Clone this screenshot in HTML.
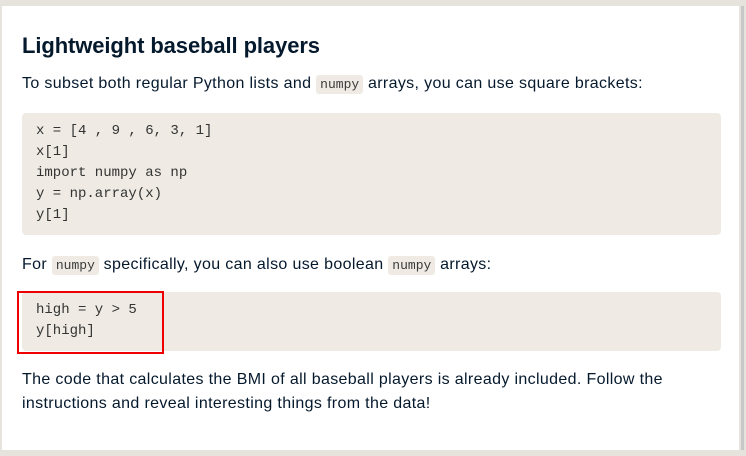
<!DOCTYPE html>
<html><head><style>
body{margin:0;width:746px;height:456px;background:#e6e2dc;font-family:"Liberation Sans",sans-serif;overflow:hidden;position:relative}
.panel{position:absolute;left:2px;top:6px;width:737px;height:444px;background:#fff}
.sb{position:absolute;left:741px;top:6px;width:3px;height:444px;background:#c8c8c8}
h1{position:absolute;left:22px;top:33px;margin:0;font-size:22px;font-weight:bold;color:#05192d;letter-spacing:-0.1px}
p{position:absolute;left:22px;margin:0;font-size:16px;color:#05192d;line-height:24px;letter-spacing:0.35px}
code.i{font-family:"Liberation Mono",monospace;font-size:13px;background:#efebe4;padding:2px 4px;border-radius:3px;color:#3a3a3a;letter-spacing:0}
.code{position:absolute;left:22px;width:699px;background:#efebe4;border-radius:4px;font-family:"Liberation Mono",monospace;font-size:14px;line-height:21px;color:#333;white-space:pre;padding:0 14px;box-sizing:border-box}
.red{position:absolute;left:17px;top:291px;width:143px;height:59px;border:2px solid #e00;}
</style></head><body>
<div class="panel"></div><div class="sb"></div>
<h1>Lightweight baseball players</h1>
<p style="top:72px">To subset both regular Python lists and <code class="i">numpy</code> arrays, you can use square brackets:</p>
<div class="code" style="top:113px;height:122px;padding-top:8px">x = [4 , 9 , 6, 3, 1]
x[1]
import numpy as np
y = np.array(x)
y[1]</div>
<p style="top:253px">For <code class="i">numpy</code> specifically, you can also use boolean <code class="i">numpy</code> arrays:</p>
<div class="code" style="top:292px;height:59px;padding-top:8px">high = y &gt; 5
y[high]</div>
<div class="red"></div>
<p style="top:368px;width:660px">The code that calculates the BMI of all baseball players is already included. Follow the instructions and reveal interesting things from the data!</p>
</body></html>
